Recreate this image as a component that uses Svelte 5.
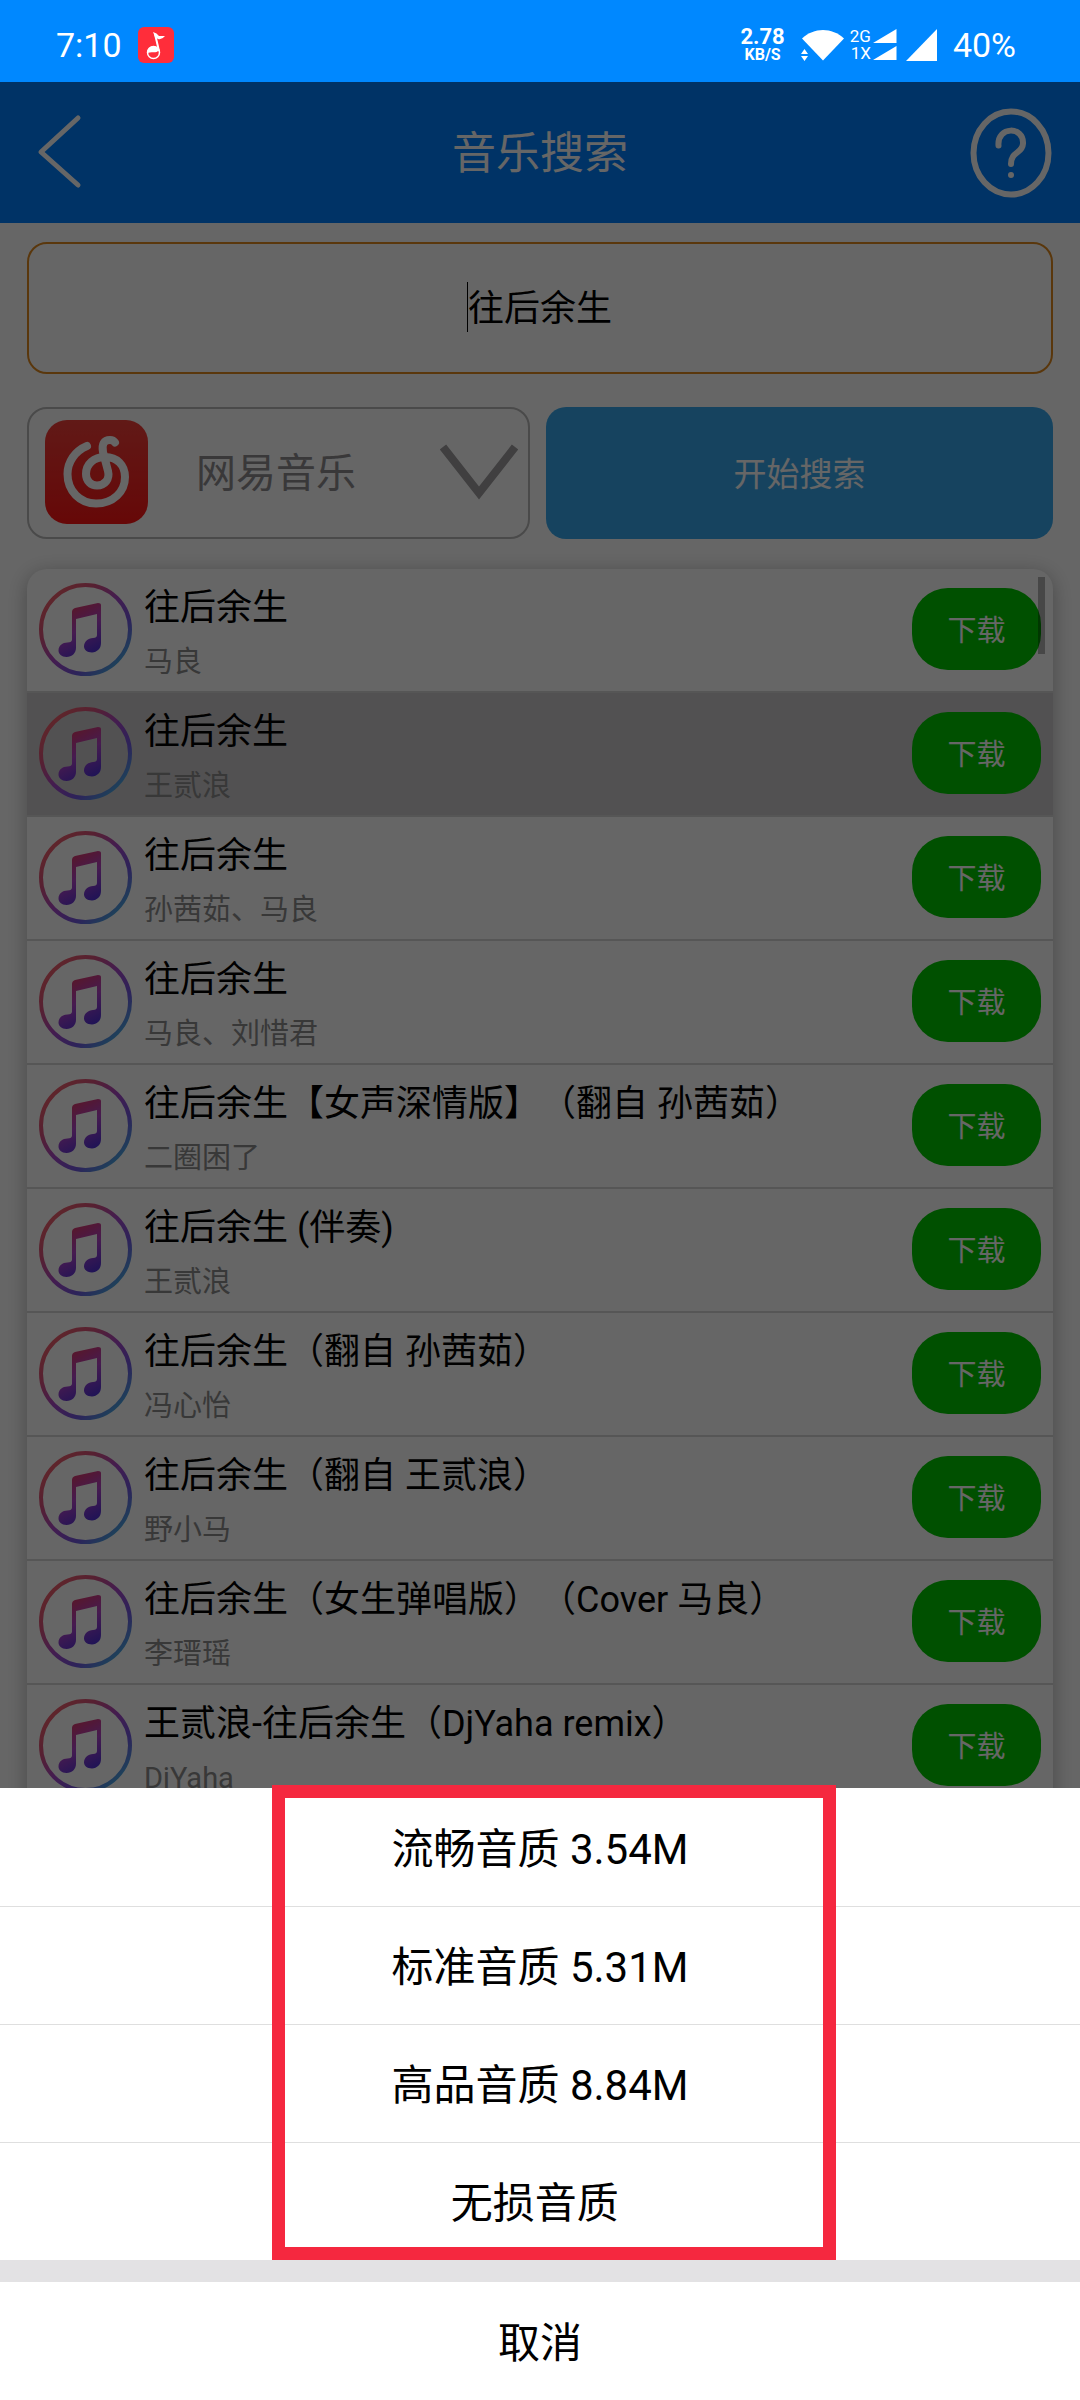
<script>
	let keyword = '往后余生';
	let source = 'netease';
	let picked = 1;

	const songs = [
		{ title: '往后余生', artist: '马良' },
		{ title: '往后余生', artist: '王贰浪' },
		{ title: '往后余生', artist: '孙茜茹、马良' },
		{ title: '往后余生', artist: '马良、刘惜君' },
		{ title: '往后余生【女声深情版】（翻自 孙茜茹）', artist: '二圈困了' },
		{ title: '往后余生 (伴奏)', artist: '王贰浪' },
		{ title: '往后余生（翻自 孙茜茹）', artist: '冯心怡' },
		{ title: '往后余生（翻自 王贰浪）', artist: '野小马' },
		{ title: '往后余生（女生弹唱版）（Cover 马良）', artist: '李瑨瑶' },
		{ title: '王贰浪-往后余生（DjYaha remix）', artist: 'DjYaha' }
	];

	const qualities = [
		{ name: '流畅音质', size: '3.54M' },
		{ name: '标准音质', size: '5.31M' },
		{ name: '高品音质', size: '8.84M' },
		{ name: '无损音质', size: '' }
	];
</script>

<svelte:head>
	<title>音乐搜索</title>
</svelte:head>

<div class="screen">
	<div class="status">
		<span class="clock">7:10</span>
		<svg class="app-badge" width="36" height="36" viewBox="0 0 36 36">
			<rect width="36" height="36" rx="6" fill="#ff2d3a" />
			<path d="M15 5q4 1 6 4l6 0q-3 4-7 3l-3-2" fill="#fff" />
			<path d="M17 7l4 17" stroke="#fff" stroke-width="2" />
			<circle cx="15.500" cy="25.500" r="6" fill="none" stroke="#fff" stroke-width="1.500" />
			<path d="M9.500 26a6 6 0 0 1 11.500-3c-3 4-7 1-11.500 3z" fill="#fff" />
		</svg>
		<div class="speed">
			<b>2.78</b>
			<small>KB/S</small>
		</div>
		<svg class="wifi" width="43" height="32" viewBox="0 0 43 32">
			<path d="M1 9.500C13-2 31-2 43 9.500L22 31.500z" fill="#fff" />
			<path d="M-1 19h10.500v13H-1z" fill="#0088ff" />
			<path d="M0 25l3.500-5 3.500 5zM0 27l3.500 5L7 27z" fill="#fff" />
		</svg>
		<div class="modes">
			<span>2G</span>
			<span>1X</span>
		</div>
		<svg class="sim" width="24" height="32" viewBox="0 0 24 32">
			<path d="M0 14L23.500 0v14zM0 31L23.500 17v14z" fill="#fff" />
		</svg>
		<svg class="signal" width="31" height="32" viewBox="0 0 31 32">
			<path d="M0 32L31 0v32z" fill="#fff" />
		</svg>
		<span class="battery">40%</span>
	</div>

	<div class="page">
		<header>
			<button class="icon-btn" aria-label="返回">
				<svg width="82" height="80" viewBox="0 0 82 80">
					<path d="M50 5L13 39l37 33" fill="none" stroke="#fff" stroke-width="5" stroke-linecap="round" stroke-linejoin="round" />
				</svg>
			</button>
			<h1>音乐搜索</h1>
			<button class="icon-btn" aria-label="帮助">
				<svg width="82" height="90" viewBox="0 0 82 90">
					<ellipse cx="41" cy="45" rx="37.500" ry="41.500" fill="none" stroke="#fff" stroke-width="6" />
					<path d="M28.500 37.500C27 18 54 18 53 35.500C52.500 46 41 43 41 56" fill="none" stroke="#fff" stroke-width="6" stroke-linecap="round" />
					<circle cx="41" cy="67" r="3" fill="#fff" />
				</svg>
			</button>
		</header>

		<main>
			<div class="keyword">
				<input type="text" aria-label="关键词" bind:value={keyword} />
				<i class="caret"></i>
			</div>

			<div class="controls">
				<label class="source">
					<svg width="103" height="104" viewBox="0 0 103 104">
						<defs>
							<linearGradient id="red" x1="0" y1="0" x2="0" y2="1">
								<stop offset="0" stop-color="#f2403a" />
								<stop offset="1" stop-color="#ff1414" />
							</linearGradient>
						</defs>
						<rect width="103" height="104" rx="22" fill="url(#red)" />
						<path
							d="M42 26C30 31 22.500 42 22.500 54C22.500 71 35 83.500 51 83.500C68 83.500 80 72 80 57C80 45 72 37 60 37C49 37 41 44 41 54C41 61 46 65.500 52 65.500C60 65.500 65 59 63 51L58 32C56.500 24 59 20 65 20C68 20 69 21 70 22.500"
							fill="none"
							stroke="#fff"
							stroke-width="8"
							stroke-linecap="round"
						/>
					</svg>
					<select aria-label="音乐来源" bind:value={source}>
						<option value="netease">网易音乐</option>
					</select>
					<svg width="78" height="56" viewBox="0 0 78 56">
						<path d="M3 3l36 46L75 3" fill="none" stroke="#a09ea0" stroke-width="8" />
					</svg>
				</label>
				<button class="search">开始搜索</button>
			</div>

			<ul class="songs">
				{#each songs as song, index}
					<li class:picked={index === picked}>
						<svg width="93" height="93" viewBox="0 0 93 93">
							<defs>
								<linearGradient id="ring{index}" x1="0.050" y1="0.150" x2="0.850" y2="0.950">
									<stop offset="0" stop-color="#f0606a" />
									<stop offset="0.250" stop-color="#d8527c" />
									<stop offset="0.500" stop-color="#a848c8" />
									<stop offset="0.750" stop-color="#7058e0" />
									<stop offset="1" stop-color="#45b0e0" />
								</linearGradient>
								<linearGradient id="note{index}" x1="0.300" y1="0" x2="0.700" y2="1">
									<stop offset="0.100" stop-color="#d93a70" />
									<stop offset="0.500" stop-color="#b044c8" />
									<stop offset="1" stop-color="#4a30d8" />
								</linearGradient>
							</defs>
							<circle cx="46.500" cy="46.500" r="44.500" fill="none" stroke="url(#ring{index})" stroke-width="4" />
							<path
								d="M33 29q0-3 3-4l23-5q3 0 3 2v38c0 6-4 9-9 9.500c-5 0-8-3-8-6c0-5 4-8 9-8.500q4 0 4-3V31L37 36v29c0 5-4 9-9.500 9c-5 0-8-3-8-6.500c0-5 4-8 9-8q4.500 0 4.500-3z"
								fill="url(#note{index})"
							/>
						</svg>
						<div class="info">
							<span class="title">{song.title}</span>
							<span class="artist">{song.artist}</span>
						</div>
						<button class="download" on:click={() => (picked = index)}>下载</button>
					</li>
				{/each}
			</ul>
			<div class="scrollbar"></div>
		</main>

		<div class="mask"></div>
	</div>

	<div class="sheet">
		<div class="options">
			{#each qualities as quality}
				<button>{quality.name}&nbsp;{quality.size}</button>
			{/each}
			<div class="highlight"></div>
		</div>
		<button class="cancel">取消</button>
	</div>
</div>

<style>
	:global(body) {
		background: #fff;
	}

	.screen,
	.screen * {
		box-sizing: border-box;
	}

	.screen {
		position: relative;
		display: flex;
		flex-direction: column;
		height: 100vh;
		overflow: hidden;
		font-family: Roboto, 'Noto Sans CJK SC', sans-serif;
		/* keep full width brackets full width */
		text-spacing-trim: space-all;
	}

	button,
	input,
	select {
		margin: 0;
		padding: 0;
		border: none;
		background: none;
		font-family: inherit;
	}

	svg {
		flex: none;
		display: block;
	}

	.status {
		display: flex;
		align-items: center;
		height: 82px;
		padding: 8px 64px 0 56px;
		background: #0088ff;
		color: #fff;
	}

	.clock,
	.battery {
		font-size: 34px;
		line-height: 40px;
	}

	.app-badge {
		margin-left: 16px;
	}

	.speed {
		display: flex;
		flex-direction: column;
		align-items: center;
		margin-left: auto;
	}

	.speed b {
		font-size: 22px;
		line-height: 20px;
	}

	.speed small {
		font-size: 16px;
		font-weight: bold;
		line-height: 16px;
	}

	.wifi {
		margin-left: 16px;
	}

	.modes {
		display: flex;
		flex-direction: column;
		align-items: flex-end;
		margin-left: 6px;
		font-size: 17px;
		line-height: 17px;
	}

	.sim {
		margin-left: 2px;
	}

	.signal {
		margin-left: 9px;
	}

	.battery {
		margin-left: 16px;
	}

	.page {
		position: relative;
		flex: 1;
		display: flex;
		flex-direction: column;
		min-height: 0;
		background: #fff;
	}

	header {
		display: flex;
		align-items: center;
		justify-content: space-between;
		height: 141px;
		padding: 0 28px;
		background: #0080ff;
	}

	h1 {
		margin: 0;
		padding-bottom: 5px;
		font-size: 44px;
		font-weight: normal;
		color: #fff;
	}

	.icon-btn {
		display: flex;
		width: 82px;
	}

	main {
		position: relative;
		flex: 1;
		display: flex;
		flex-direction: column;
		min-height: 0;
		padding: 19px 27px 0;
	}

	.keyword {
		position: relative;
	}

	.keyword input {
		width: 100%;
		height: 132px;
		padding-bottom: 6px;
		border: 2px solid #e08a20;
		border-radius: 20px;
		font-size: 36px;
		text-align: center;
		color: #000;
		outline: none;
	}

	.caret {
		position: absolute;
		top: 40px;
		left: calc(50% - 73px);
		width: 1px;
		height: 50px;
		background: #000;
	}

	.controls {
		display: grid;
		grid-template-columns: 503fr 507fr;
		gap: 16px;
		margin-top: 33px;
	}

	.source {
		display: flex;
		align-items: center;
		height: 132px;
		padding: 0 10px 3px 16px;
		border: 2px solid #b8b8b8;
		border-radius: 20px;
	}

	.source select {
		flex: 1;
		min-width: 0;
		padding: 3px 0 0 48px;
		appearance: none;
		font-size: 40px;
		color: #8e8c90;
	}

	.search {
		height: 132px;
		padding-bottom: 3px;
		border-radius: 20px;
		background: #39a9ee;
		font-size: 33px;
		color: #fff;
	}

	.songs {
		flex: 1;
		min-height: 0;
		margin: 30px 0 0;
		padding: 0;
		overflow: hidden;
		list-style: none;
		border-radius: 20px 20px 0 0;
		box-shadow: 0 4px 20px rgba(0, 0, 0, 0.3);
	}

	.songs li {
		display: flex;
		align-items: center;
		gap: 12px;
		height: 124px;
		padding: 0 12px 2px;
		border-bottom: 2px solid #d8d8d8;
	}

	.songs li.picked {
		background: #cdcbcd;
	}

	.info {
		flex: 1;
		display: flex;
		flex-direction: column;
		min-width: 0;
	}

	.title {
		font-size: 36px;
		line-height: 66px;
		color: #000;
		white-space: nowrap;
	}

	.artist {
		font-size: 29px;
		line-height: 42px;
		color: #8c8c8c;
	}

	.download {
		width: 129px;
		height: 82px;
		padding-bottom: 3px;
		border-radius: 36px;
		background: #00c800;
		font-size: 29px;
		color: #fff;
	}

	.scrollbar {
		position: absolute;
		top: 354px;
		right: 35px;
		width: 7px;
		height: 77px;
		background: rgba(0, 0, 0, 0.3);
	}

	.mask {
		position: absolute;
		inset: 0;
		background: rgba(0, 0, 0, 0.6);
	}

	.sheet {
		position: absolute;
		left: 0;
		right: 0;
		bottom: 0;
		background: #e3e2e4;
	}

	.options {
		position: relative;
		margin-bottom: 22px;
	}

	.sheet button {
		display: block;
		width: 100%;
		height: 118px;
		padding-bottom: 4px;
		background: #fff;
		font-size: 42px;
		color: #000;
	}

	.options button + button {
		border-top: 1px solid #dfdfdf;
	}

	/* frame around the quality list */
	.highlight {
		position: absolute;
		top: -3px;
		bottom: 0;
		left: 25.2%;
		right: 22.6%;
		border: 13px solid #f5283f;
		pointer-events: none;
	}
</style>
